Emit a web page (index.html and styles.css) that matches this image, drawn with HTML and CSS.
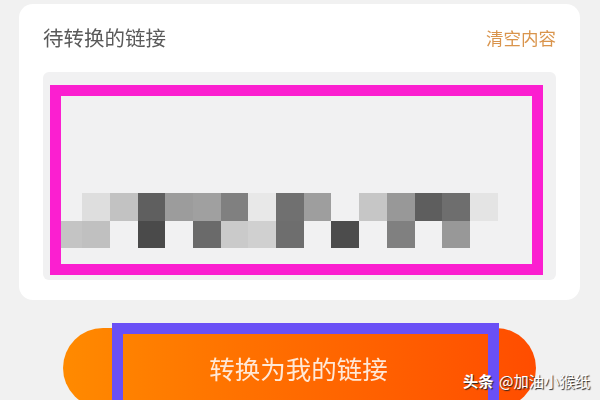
FILE: index.html
```html
<!DOCTYPE html>
<html lang="zh-CN">
<head>
    <meta charset="UTF-8">
    <title>转换为我的链接</title>
    <link rel="stylesheet" href="styles.css">
</head>
<body>
    <div class="page">
        <div class="card">
            <div class="card-header">
                <span class="card-title">待转换的链接</span>
                <a class="clear-link">清空内容</a>
            </div>
            <div class="link-box">
                <div class="mark-frame">
                    <div class="mosaic">
                        <i></i><i class="t-de"></i><i class="t-c2"></i><i class="t-5f"></i><i class="t-9c"></i><i class="t-a0"></i><i class="t-80"></i><i class="t-e8"></i><i class="t-70"></i><i class="t-9e"></i><i></i><i class="t-c6"></i><i class="t-98"></i><i class="t-5e"></i><i class="t-6e"></i><i class="t-e4"></i>
                        <i class="t-c4"></i><i class="t-c0"></i><i></i><i class="t-4a"></i><i></i><i class="t-6a"></i><i class="t-ca"></i><i class="t-d0"></i><i class="t-6e"></i><i></i><i class="t-4c"></i><i></i><i class="t-80"></i><i></i><i class="t-98"></i><i></i>
                    </div>
                </div>
            </div>
        </div>
        <div class="convert-btn">
            <span>转换为我的链接</span>
            <div class="btn-frame"></div>
        </div>
    </div>
    <div class="watermark"><b>头条</b> @加油小猴纸</div>
</body>
</html>
```

FILE: styles.css
```css
body {
    margin: 0;
    background-color: #f1f1f1;
    font-family: "Noto Sans CJK SC", "Noto Sans", sans-serif;
    position: relative;
}

/* the screenshot is a soft, upscaled photo and is cut off at the bottom */
.page {
    height: 396px;
    padding: 4px 20px 0 19px;
    overflow: hidden;
    filter: blur(0.4px);
}

.card {
    height: 296px;
    box-sizing: border-box;
    padding: 0 24px;
    background-color: #fff;
    border-radius: 14px;
}

.card-header {
    height: 66px;
    margin-bottom: 2px;
    display: flex;
    align-items: center;
    justify-content: space-between;
}

.card-title {
    font-size: 20.5px;
    color: #5a5a5a;
}

.clear-link {
    font-size: 17.5px;
    color: #d9944c;
}

.link-box {
    height: 208px;
    box-sizing: border-box;
    padding: 13px 13px 5px 7px;
    background-color: #f1f1f2;
    border-radius: 6px;
}

.mark-frame {
    height: 190px;
    box-sizing: border-box;
    padding-top: 97px;
    border: 11px solid #fb1fd0;
}

.mosaic {
    display: grid;
    grid-template-columns: 21.3px repeat(15, 27.7px);
    grid-auto-rows: 27.5px;
}

.t-de { background-color: #dedede; }
.t-c2 { background-color: #c2c2c2; }
.t-5f { background-color: #5f5f5f; }
.t-9c { background-color: #9c9c9c; }
.t-a0 { background-color: #a0a0a0; }
.t-80 { background-color: #808080; }
.t-e8 { background-color: #e8e8e8; }
.t-70 { background-color: #707070; }
.t-9e { background-color: #9e9e9e; }
.t-c6 { background-color: #c6c6c6; }
.t-98 { background-color: #989898; }
.t-5e { background-color: #5e5e5e; }
.t-6e { background-color: #6e6e6e; }
.t-e4 { background-color: #e4e4e4; }
.t-c4 { background-color: #c4c4c4; }
.t-c0 { background-color: #c0c0c0; }
.t-4a { background-color: #4a4a4a; }
.t-6a { background-color: #6a6a6a; }
.t-ca { background-color: #cacaca; }
.t-d0 { background-color: #d0d0d0; }
.t-4c { background-color: #4c4c4c; }

.convert-btn {
    position: relative;
    width: 473px;
    height: 80px;
    margin: 28px 0 0 44px;
    display: flex;
    align-items: center;
    justify-content: center;
    border-radius: 40px;
    background: linear-gradient(90deg, #ff8a00, #ff7000 40%, #ff4d00);
    color: #ffe8d6;
    font-size: 25.5px;
}

.convert-btn span {
    margin: -2px 2px 0 0;
}

.btn-frame {
    position: absolute;
    left: 49px;
    right: 37px;
    top: -5px;
    height: 100px;
    border: 11px solid #6a50f6;
    box-sizing: border-box;
}

.watermark {
    position: absolute;
    right: 10px;
    top: 369px;
    font-size: 15.3px;
    color: #fff;
    text-shadow: 1px 1px 1px #222;
}

.watermark b {
    margin-right: 2px;
}
```
